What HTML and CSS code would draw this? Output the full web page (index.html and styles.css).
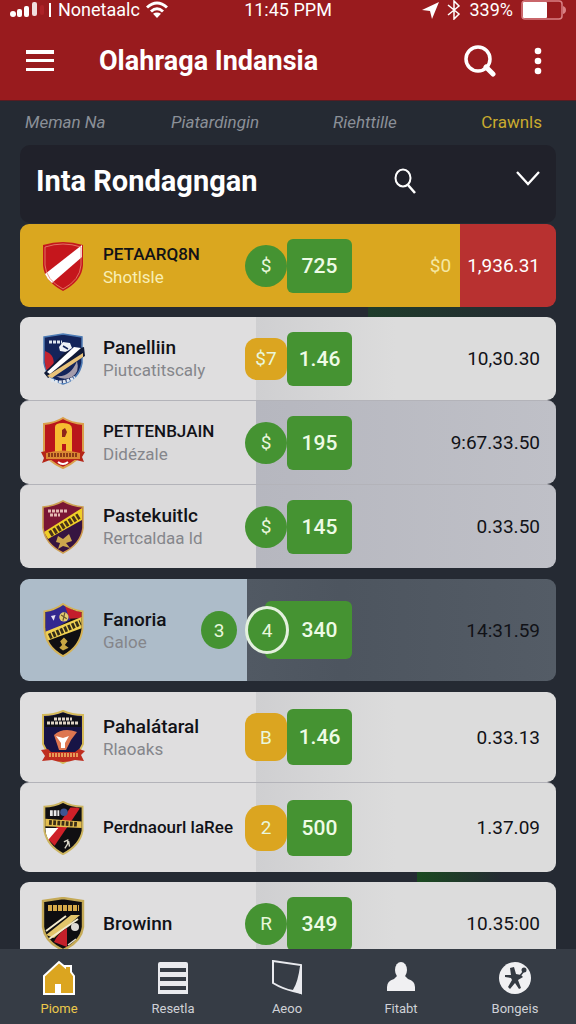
FILE: index.html
```html
<!DOCTYPE html>
<html lang="id">
<head>
    <meta charset="UTF-8">
    <meta name="viewport" content="width=device-width, initial-scale=1.0">
    <title>Olahraga Indansia</title>
    <link rel="stylesheet" href="styles.css">
</head>
<body>
    <div class="app">
        <header class="header">
            <div class="status-bar">
                <div class="status-left">
                    <svg width="42" height="18" viewBox="0 0 42 18" fill="#fff">
                        <circle cx="3" cy="13" r="3"/>
                        <rect x="7" y="8" width="5" height="8" rx="2"/>
                        <rect x="14" y="5" width="5" height="11" rx="2"/>
                        <rect x="22" y="1" width="5" height="14" rx="2" opacity=".85"/>
                        <rect x="30" y="4" width="4" height="10" rx="2" fill="#c02a30" opacity=".5"/>
                        <rect x="39" y="2" width="2" height="14"/>
                    </svg>
                    <span>Nonetaalc</span>
                    <svg width="22" height="18" viewBox="0 0 22 18" fill="none" stroke="#fff" stroke-width="3">
                        <path d="M1 6.5Q11 -2.5 21 6.5"/>
                        <path d="M5 10.5Q11 5 17 10.5"/>
                        <path d="M11 17L7 12.8Q11 10 15 12.8Z" fill="#fff" stroke="none"/>
                    </svg>
                </div>
                <span class="status-time">11:45 PPM</span>
                <div class="status-right">
                    <svg width="17" height="18" viewBox="0 0 17 18" fill="#fff"><path d="M0 9L17 1L10 18L8 10Z"/></svg>
                    <svg width="14" height="20" viewBox="0 0 14 20" fill="none" stroke="#fff" stroke-width="1.5"><path d="M1 5L12 14L7 19V1L12 6L1 15"/></svg>
                    <span>339%</span>
                    <svg width="45" height="20" viewBox="0 0 45 20">
                        <rect x="1" y="1" width="40" height="18" rx="3" fill="none" stroke="#d98084" stroke-width="1.5"/>
                        <rect x="2" y="2" width="24" height="16" rx="1" fill="#fff"/>
                        <path d="M42 6Q45 7 45 10T42 14Z" fill="#d98084"/>
                    </svg>
                </div>
            </div>
            <div class="app-bar">
                <button class="icon-button" aria-label="Menu">
                    <svg width="28" height="22" viewBox="0 0 28 22" fill="#fff"><path d="M0 0H28V4H0ZM0 9H28V12H0ZM0 18H28V21H0Z"/></svg>
                </button>
                <h1>Olahraga Indansia</h1>
                <button class="icon-button" aria-label="Search">
                    <svg width="32" height="32" viewBox="0 0 32 32" fill="none" stroke="#fff" stroke-width="3.5"><circle cx="14" cy="14" r="12"/><path d="M22 22L29 29" stroke-width="5" stroke-linecap="round"/></svg>
                </button>
                <button class="icon-button" aria-label="More">
                    <svg width="8" height="28" viewBox="0 0 8 28" fill="#fff"><circle cx="4" cy="4" r="3.3"/><circle cx="4" cy="14" r="3.3"/><circle cx="4" cy="24" r="3.3"/></svg>
                </button>
            </div>
        </header>

        <nav class="tabs">
            <a href="#">Meman Na</a>
            <a href="#">Piatardingin</a>
            <a href="#">Riehttille</a>
            <a href="#" class="active">Crawnls</a>
        </nav>

        <main class="content">
            <div class="section-header">
                <h2>Inta Rondagngan</h2>
                <button class="icon-button" aria-label="Search list">
                    <svg width="22" height="26" viewBox="0 0 22 26" fill="none" stroke="#fff" stroke-width="2"><ellipse cx="9" cy="10" rx="7.5" ry="8.5"/><path d="M14 17L21 25" stroke-width="2.5"/></svg>
                </button>
                <button class="icon-button" aria-label="Expand">
                    <svg width="24" height="22" viewBox="0 0 24 22" fill="none" stroke="#fff" stroke-width="2.3"><path d="M1 2L12 14L23 2"/></svg>
                </button>
            </div>

            <ul class="group">
                <li class="row featured">
                    <svg class="crest" viewBox="0 0 44 52">
                        <path d="M2 5Q22 -1 42 5V25Q41 41 22 51Q3 41 2 25Z" fill="#c5161c"/>
                        <path d="M4 34L41 5V17L11 43Q6 39 4 34Z" fill="#fff"/>
                        <path d="M4 7Q22 1 40 7V25Q39 40 22 49Q5 40 4 25Z" fill="none" stroke="#e98a73" stroke-width=".8"/>
                    </svg>
                    <div class="team"><div class="names"><strong class="caps">PETAARQ8N</strong><small>Shotlsle</small></div></div>
                    <span class="badge round">$</span>
                    <span class="score">725</span>
                    <span class="extra">$0</span>
                    <span class="value">1,936.31</span>
                </li>
            </ul>
            <div class="gap gap-top"></div>

            <ul class="group">
                <li class="row light">
                    <svg class="crest" viewBox="0 0 44 52">
                        <path d="M3 4L22 1L41 4V30Q38 46 22 51Q6 46 3 30Z" fill="#14245a" stroke="#4d7bb5" stroke-width="1.5"/>
                        <path d="M4 18Q15 22 12 34L5 37Q3 28 4 18Z" fill="#c3242f"/>
                        <path d="M15 43Q29 45 36 28Q39 39 31 44Q23 48 15 43Z" fill="#a59cab"/>
                        <path d="M8 9H21M10 47Q22 52 34 44" fill="none" stroke="#dfe6ef" stroke-width="3" stroke-dasharray="3 1"/>
                        <path d="M18 14L22 9L29 10L31 15L25 19L19 18Z" fill="#f0f2f6"/>
                        <path d="M22 13L27 16" stroke="#14245a" stroke-width="1.5"/>
                        <path d="M3 40L24 19L43 14L44 23L12 42L7 45Z" fill="#101936"/>
                        <path d="M6 39L33 14L40 15L31 23L9 41Z" fill="#fff"/>
                        <path d="M6 43L42 20V24L11 45Z" fill="#e9c37a"/>
                    </svg>
                    <div class="team"><div class="names"><strong>Panelliin</strong><small>Piutcatitscaly</small></div></div>
                    <span class="badge gold">$7</span>
                    <span class="score">1.46</span>
                    <span class="value">10,30.30</span>
                </li>
                <li class="row silver">
                    <svg class="crest" viewBox="0 0 44 52">
                        <path d="M3 7Q14 6 22 1Q30 6 42 7V34Q39 43 22 51Q6 44 3 34Z" fill="#b9161b" stroke="#dba04b" stroke-width="2"/>
                        <path d="M14 35V10Q14 6 22 6Q31 6 31 12V35H25V27H21V35Z" fill="#f6bd30"/>
                        <path d="M21 13L24 11L26 15L24 20H21Z" fill="#8e251a"/>
                        <path d="M0 35L5 34L6 37H38L40 34L44 35L41 40L43 45L35 43H9L1 46L3 41Z" fill="#b52618"/>
                        <path d="M5 36Q22 31 39 36V42H5Z" fill="#db8934"/>
                        <path d="M7 38H37" stroke="#8c3b17" stroke-width="4" stroke-dasharray="2 1"/>
                        <path d="M17 45Q22 49 27 45" fill="none" stroke="#fff" stroke-width="2"/>
                    </svg>
                    <div class="team"><div class="names"><strong class="caps">PETTENBJAIN</strong><small>Didézale</small></div></div>
                    <span class="badge round">$</span>
                    <span class="score">195</span>
                    <span class="value">9:67.33.50</span>
                </li>
                <li class="row silver">
                    <svg class="crest" viewBox="0 0 44 54">
                        <path d="M2 7Q13 6 22 1Q31 6 42 7V28Q40 44 22 53Q4 44 2 28Z" fill="#7a1634"/>
                        <path d="M41 16V28Q39 44 22 52Q10 46 5 37Z" fill="#361441"/>
                        <path d="M3 32L41 8V20L7 39Z" fill="#f0cf27"/>
                        <path d="M9 34L38 16" stroke="#4a3219" stroke-width="6" stroke-dasharray="3 1.5"/>
                        <path d="M7 11H27M9 15H19" stroke="#e3b8b2" stroke-width="3" stroke-dasharray="3 1"/>
                        <path d="M17 36L22 39L28 34L31 41L25 43L29 48L22 46L17 49L19 43L15 42Z" fill="#cda64d"/>
                        <path d="M2 7Q13 6 22 1Q31 6 42 7V28Q40 44 22 53Q4 44 2 28Z" fill="none" stroke="#cda052" stroke-width="1.6"/>
                    </svg>
                    <div class="team"><div class="names"><strong>Pastekuitlc</strong><small>Rertcaldaa ld</small></div></div>
                    <span class="badge round">$</span>
                    <span class="score">145</span>
                    <span class="value">0.33.50</span>
                </li>
            </ul>
            <div class="gap"></div>

            <ul class="group">
                <li class="row selected">
                    <svg class="crest" viewBox="0 0 44 58">
                        <path d="M2 9Q14 7 22 1Q31 7 43 9V27Q41 47 22 57Q3 47 2 27Z" fill="#100f12"/>
                        <path d="M3 10Q14 8 22 2L27 5L30 18L3 33Z" fill="#33288f"/>
                        <path d="M24 3Q32 8 42 10V16L29 17Z" fill="#c31d2c"/>
                        <circle cx="23" cy="15" r="5" fill="#e5ce6f"/>
                        <path d="M20 13L26 17M24 10L22 19" stroke="#6b5630" stroke-width="1.3"/>
                        <path d="M9 14L14 13L12 19Z" fill="#e8e2f2"/>
                        <path d="M3 31L42 15V27L4 41Z" fill="#efd052"/>
                        <path d="M7 36L41 21" stroke="#342d19" stroke-width="6" stroke-dasharray="3 1.5"/>
                        <path d="M19 41L23 37L27 41L24 45L28 48L22 51L18 48L21 45Z" fill="#c9a744"/>
                        <path d="M2 9Q14 7 22 1Q31 7 43 9V27Q41 47 22 57Q3 47 2 27Z" fill="none" stroke="#d5b357" stroke-width="2"/>
                    </svg>
                    <div class="team"><div class="names"><strong>Fanoria</strong><small>Galoe</small></div><span class="badge round small">3</span></div>
                    <span class="badge round ring">4</span>
                    <span class="score">340</span>
                    <span class="value">14:31.59</span>
                </li>
            </ul>
            <div class="gap"></div>

            <ul class="group">
                <li class="row light tall">
                    <svg class="crest" viewBox="0 0 44 54">
                        <path d="M2 5Q13 5 22 1Q31 5 42 5V34Q38 45 22 53Q6 45 2 34Z" fill="#171446" stroke="#d5ba59" stroke-width="2"/>
                        <path d="M4 7Q14 6 22 3Q31 6 40 7V17H4Z" fill="#101019"/>
                        <path d="M6 13H38M13 9H31" stroke="#dfd4c5" stroke-width="3" stroke-dasharray="3 1"/>
                        <path d="M13 25Q22 17 36 22L30 30L25 40H18Z" fill="#dd7650"/>
                        <path d="M15 26L22 28L28 26L24 33V38H20V33Z" fill="#fff"/>
                        <path d="M0 40L7 39L10 42H34L38 39L44 41L40 45L43 51L34 50Q22 54 11 50L1 51L4 46Z" fill="#bf2e20"/>
                        <path d="M8 45H37" stroke="#e79a56" stroke-width="4" stroke-dasharray="2 1"/>
                    </svg>
                    <div class="team"><div class="names"><strong>Pahalátaral</strong><small>Rlaoaks</small></div></div>
                    <span class="badge gold square">B</span>
                    <span class="score">1.46</span>
                    <span class="value">0.33.13</span>
                </li>
                <li class="row light tall">
                    <svg class="crest" viewBox="0 0 44 58">
                        <path d="M2 6Q13 6 22 1Q31 6 43 6V32Q40 48 22 57Q5 48 2 32Z" fill="#100f12"/>
                        <path d="M37 7L40 8L13 48L6 41L30 7Z" fill="#cf2028"/>
                        <path d="M3 29H17L6 42Q3 36 3 29Z" fill="#fff"/>
                        <path d="M8 13H18" stroke="#e9e9e9" stroke-width="6" stroke-dasharray="3 1"/>
                        <circle cx="23" cy="12" r="4" fill="#3d5592"/>
                        <path d="M3 19L42 22V29L3 27Z" fill="#e3bd4e"/>
                        <path d="M7 23L37 25" stroke="#3a2d17" stroke-width="5" stroke-dasharray="3 1.5"/>
                        <path d="M23 44L27 42V46L24 51M28 43L29 49" fill="none" stroke="#d8d4c7" stroke-width="1.5"/>
                        <path d="M2 6Q13 6 22 1Q31 6 43 6V32Q40 48 22 57Q5 48 2 32Z" fill="none" stroke="#cdb560" stroke-width="2"/>
                    </svg>
                    <div class="team"><div class="names"><strong class="caps">Perdnaourl laRee</strong></div></div>
                    <span class="badge gold round">2</span>
                    <span class="score">500</span>
                    <span class="value">1.37.09</span>
                </li>
            </ul>
            <div class="gap gap-bottom"></div>

            <ul class="group">
                <li class="row light">
                    <svg class="crest" viewBox="0 0 44 54">
                        <path d="M2 4L22 1L42 4V30Q40 45 22 53Q4 45 2 30Z" fill="#0e0d10"/>
                        <path d="M7 11H38" stroke="#d5a94a" stroke-width="6" stroke-dasharray="4 1"/>
                        <path d="M5 38L30 18H39L13 41Z" fill="#e3c56a"/>
                        <path d="M5 34L25 19M8 42L37 22" stroke="#f3ebce" stroke-width="2"/>
                        <path d="M26 31V50L13 45Q17 36 26 31Z" fill="#c3202a"/>
                        <circle cx="34" cy="30" r="4" fill="#ddd9d5"/>
                        <path d="M27 48L35 42" stroke="#e8e6df" stroke-width="1.5"/>
                        <path d="M2 4L22 1L42 4V30Q40 45 22 53Q4 45 2 30Z" fill="none" stroke="#c5aa57" stroke-width="2.4"/>
                    </svg>
                    <div class="team"><div class="names"><strong>Browinn</strong></div></div>
                    <span class="badge round">R</span>
                    <span class="score">349</span>
                    <span class="value">10.35:00</span>
                </li>
            </ul>
        </main>

        <nav class="bottom-nav">
            <a href="#" class="active">
                <svg width="34" height="36" viewBox="0 0 34 36"><path d="M2 34V16L17 2L23 7V6H29V12L32 16V34Z" fill="#dba520" stroke="#fff" stroke-width="2"/><path d="M13 34V24H19V34" fill="#fff"/></svg>
                Piome
            </a>
            <a href="#">
                <svg width="34" height="36" viewBox="0 0 34 36" fill="#e9eaee"><path d="M4 2H30Q32 2 32 4V8H2V4Q2 2 4 2ZM2 12H32V17H2ZM2 21H32V26H2ZM2 30H32V34H2Z"/><path d="M2 7H4V34H2ZM30 7H32V34H30Z"/></svg>
                Resetla
            </a>
            <a href="#">
                <svg width="34" height="36" viewBox="0 0 34 36" fill="none" stroke="#e9eaee" stroke-width="2"><path d="M3 1L31 5V33L23 31Q13 29 3 23Z"/><path d="M31 6Q29 22 24 30L31 33Z" fill="#e9eaee"/></svg>
                Aeoo
            </a>
            <a href="#">
                <svg width="34" height="36" viewBox="0 0 34 36" fill="#f0f0f2"><ellipse cx="17" cy="10" rx="6" ry="8"/><path d="M3 31V27Q3 21 10 19L14 15H20L24 19Q31 21 31 27V31Z"/></svg>
                Fitabt
            </a>
            <a href="#">
                <svg width="34" height="36" viewBox="0 0 34 36"><circle cx="17" cy="18" r="16" fill="#f0f0f2"/><path d="M12 8L16 7L18 14L23 15L25 17L20 20L23 28L21 29L17 23L12 29L10 27L14 20L13 18L7 17V15L13 15Z" fill="#343a42"/><circle cx="26" cy="10" r="2.5" fill="#343a42"/><path d="M21 17L26 11" stroke="#343a42" stroke-width="1.5"/></svg>
                Bongeis
            </a>
        </nav>
    </div>
</body>
</html>
```
FILE: styles.css
```css
* {
    box-sizing: border-box;
}
body {
    font-family: Roboto, "Liberation Sans", sans-serif;
    margin: 0;
    background-color: #252a33;
    color: white;
}
h1, h2, ul {
    margin: 0;
    padding: 0;
}
ul {
    list-style: none;
}
a {
    color: inherit;
    text-decoration: none;
}
svg {
    display: block;
    flex: none;
}
.app {
    display: flex;
    flex-direction: column;
    height: 100vh;
}

/* header */
.header {
    background-color: #991b1e;
    border-bottom: 1px solid #571c22;
}
.status-bar {
    display: grid;
    grid-template-columns: 1fr auto 1fr;
    align-items: center;
    height: 20px;
    padding: 0 10px;
    font-size: 18px;
    line-height: 20px;
}
.status-left, .status-right {
    display: flex;
    align-items: center;
    gap: 6px;
}
.status-right {
    justify-content: flex-end;
    gap: 8px;
}
.app-bar {
    display: flex;
    align-items: center;
    height: 80px;
    padding: 2px 34px 0 26px;
}
.app-bar h1 {
    flex: 1;
    margin-left: 45px;
    font-size: 27px;
    line-height: 32px;
}
.app-bar .icon-button:last-child {
    margin-left: 38px;
}
.icon-button {
    padding: 0;
    border: none;
    background: none;
    cursor: pointer;
}

/* tabs */
.tabs {
    display: grid;
    grid-template-columns: 147fr 163fr 149fr auto;
    padding: 0 34px 0 25px;
    color: #8b9098;
    font-size: 17px;
    font-style: italic;
    line-height: 42px;
}
.tabs .active {
    color: #c9ab2e;
    font-style: normal;
}

/* list */
.content {
    flex: 1;
    min-height: 0;
    overflow: hidden;
    padding: 2px 20px 0;
}
.section-header {
    display: flex;
    align-items: center;
    height: 78px;
    margin-bottom: 1px;
    padding: 0 16px 6px;
    border-radius: 10px;
    background-color: #20212a;
}
.section-header h2 {
    flex: 1;
    font-size: 29px;
    line-height: 36px;
}
.section-header .icon-button:last-child {
    margin-left: 100px;
}
.gap {
    height: 11px;
}
.gap-top {
    height: 10px;
    background: linear-gradient(to right, transparent 65%, #1e3c2b 65%, #252a33 97%);
}
.gap-bottom {
    height: 10px;
    background: linear-gradient(to right, transparent 74%, #1a4a20 74%, #252a33 90%);
}
.row {
    display: grid;
    grid-template-columns: 62px 142px 42px 65px 1fr auto;
    align-items: center;
    height: 83px;
    padding: 0 16px 0 21px;
    border-radius: 9px;
    color: #111217;
}
.row + .row {
    border-top: 1px solid #b3b3b9;
}
.light {
    background: linear-gradient(to right, #dfdedf 236px, #cfcfd1 236px, #dcdcdc 70%);
}
.silver {
    height: 84px;
    background: linear-gradient(to right, #dbdadb 236px, #b6b7bf 236px, #bfc0c7);
}
.tall {
    height: 90px;
}
.featured {
    background: linear-gradient(to right, #daa71f calc(100% - 96px), #b83130 calc(100% - 96px));
}
.selected {
    height: 102px;
    background: linear-gradient(to right, #adbcc9 227px, #515963 227px, #4d555f 60%, #545c66);
}
.crest {
    width: 44px;
    height: 54px;
}
.team {
    display: flex;
    align-items: center;
    justify-content: space-between;
    padding-right: 8px;
}
.names strong {
    display: block;
    font-size: 19px;
    font-weight: 500;
    line-height: 23px;
    white-space: nowrap;
}
.names .caps {
    font-size: 17px;
}
.names small {
    display: block;
    color: #85868b;
    font-size: 17px;
    line-height: 22px;
    white-space: nowrap;
}
.featured small {
    color: #f8eeb5;
}
.badge {
    display: flex;
    align-items: center;
    justify-content: center;
    width: 42px;
    height: 42px;
    border-radius: 12px;
    background-color: #459332;
    color: #e9f7dc;
    font-size: 19px;
}
.round {
    border-radius: 50%;
}
.gold {
    background-color: #dba520;
}
.gold.round {
    height: 46px;
    border-radius: 16px;
}
.square {
    height: 48px;
}
.small {
    width: 36px;
    height: 38px;
}
.ring {
    z-index: 1;
    width: 44px;
    height: 48px;
    border: 3px solid #e4f0df;
}
.score {
    padding: 0 8px;
    border-radius: 6px;
    background-color: #459332;
    color: #eefbe6;
    font-size: 21px;
    font-weight: 500;
    line-height: 54px;
    text-align: center;
}
.tall .score {
    line-height: 56px;
}
.selected .score {
    margin-left: -22px;
    padding-left: 30px;
    line-height: 58px;
}
.value {
    grid-column: 6;
    font-size: 19px;
}
.extra {
    margin-right: 16px;
    color: #f5e7a2;
    font-size: 19px;
    text-align: right;
}
.featured .value {
    color: white;
}

/* bottom navigation */
.bottom-nav {
    display: grid;
    grid-template-columns: repeat(5, 1fr);
    height: 75px;
    padding: 11px 4px 0 2px;
    background-color: #363c45;
    color: #cfd1d6;
    font-size: 13px;
    line-height: 18px;
}
.bottom-nav a {
    display: flex;
    flex-direction: column;
    align-items: center;
    gap: 4px;
}
.bottom-nav .active {
    color: #ecc94b;
}
```
